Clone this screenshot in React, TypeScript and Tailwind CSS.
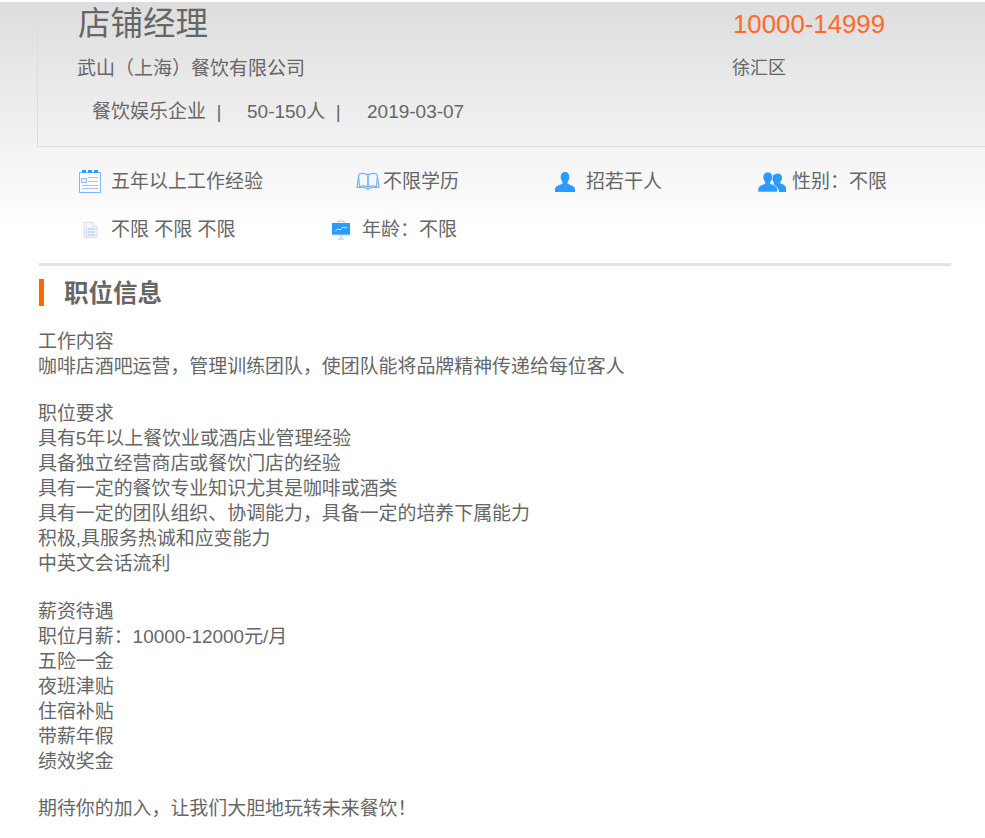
import React from "react";

const ExperienceIcon = () => (
  <svg width="24" height="24" viewBox="0 0 24 24" fill="none">
    <rect x="0.5" y="2.500" width="21" height="20" fill="#fff" stroke="#7db9ff" />
    <rect x="3" y="0" width="4" height="3" fill="#2a9bff" />
    <rect x="9" y="0" width="4" height="3" fill="#2a9bff" />
    <rect x="15" y="0" width="4" height="3" fill="#2a9bff" />
    <rect x="2.500" y="8.500" width="5" height="4" fill="#e4f1ff" stroke="#8cc3ff" />
    <path d="M9 7.500h10M9 11.500h10M3 15.500h16M3 18.500h16" stroke="#a9bff5" />
  </svg>
);

const BookIcon = () => (
  <svg width="24" height="20" viewBox="0 0 24 20" fill="none" stroke="#6fb2ff" strokeWidth="1.2">
    <path d="M2.500 3.500l1-1.500c3-1 6-1 8.500 1v12c-2.500-1.500-5.500-1.500-8.500-.5z" />
    <path d="M21.500 3.500l-1-1.500c-3-1-6-1-8.500 1v12c2.500-1.500 5.500-1.500 8.500-.5z" />
    <path d="M2.500 5L1 15.500h8l3 2 3-2h8L21.500 5" />
  </svg>
);

const PersonIcon = () => (
  <svg width="22" height="20" viewBox="0 0 22 20" fill="#2a9bff">
    <path d="M11 0c2.800 0 4.300 2 4.300 5 0 2-.8 3.900-1.800 5.100v1.600c1.500.9 7.500 2.300 7.500 5.300V20H1v-3c0-3 6-4.400 7.500-5.300v-1.600C7.500 8.900 6.700 7 6.700 5 6.700 2 8.200 0 11 0z" />
  </svg>
);

const PeopleIcon = () => (
  <svg width="28" height="20" viewBox="0 0 28 20" fill="#2a9bff">
    <path d="M20 1.500c2.500 0 4 1.800 4 4.200 0 1.700-.8 3.300-1.700 4.300v1.200c1.300.7 5.700 2 5.700 4.500V20h-7c0-3-1.500-4.500-4.500-6.200-.5-.3-.8-.5-.8-1.500V10c-.9-1-1.600-2.600-1.600-4.300 0-2.400 3.400-4.200 5.900-4.200z" />
    <path d="M10 0c3 0 4.500 2.200 4.500 5 0 2-1 3.900-2 5v1.500c1.500.9 7 2.300 7 5.300V20H0v-3.200c0-3 5.500-4.400 7-5.300V10c-1-1.100-2-3-2-5 0-2.800 2-5 5-5z" stroke="#fff" strokeWidth="0.6" />
  </svg>
);

const DocIcon = () => (
  <svg width="15" height="16" viewBox="0 0 15 16" fill="none">
    <path d="M1 .5h9l4 4v11H1z" fill="#f3f6ff" stroke="#d5dcfb" />
    <path d="M10 .5v4h4" fill="#fff" stroke="#d5dcfb" />
    <path d="M5 7h7M5 10h7M5 13h7" stroke="#aabcf5" />
    <path d="M3 7h1M3 10h1M3 13h1" stroke="#6fa8f5" />
  </svg>
);

const ChartIcon = () => (
  <svg width="20" height="20" viewBox="0 0 20 20" fill="none">
    <path d="M7 3V1h6v2" stroke="#9cc8f7" />
    <rect x="1" y="3" width="18" height="12" fill="#2a9bff" />
    <path d="M0 15h20" stroke="#b9dcff" />
    <path d="M4 11l3-2 2 1 3-3 2 1 2-1" stroke="#fff" strokeWidth="0.8" />
    <path d="M10 15v4M7 19h6" stroke="#9cc8f7" />
  </svg>
);

const lines = {
  job: ["工作内容", "咖啡店酒吧运营，管理训练团队，使团队能将品牌精神传递给每位客人"],
  need: [
    "职位要求",
    "具有5年以上餐饮业或酒店业管理经验",
    "具备独立经营商店或餐饮门店的经验",
    "具有一定的餐饮专业知识尤其是咖啡或酒类",
    "具有一定的团队组织、协调能力，具备一定的培养下属能力",
    "积极,具服务热诚和应变能力",
    "中英文会话流利",
  ],
  pay: ["薪资待遇", "职位月薪：10000-12000元/月", "五险一金", "夜班津贴", "住宿补贴", "带薪年假", "绩效奖金"],
  end: ["期待你的加入，让我们大胆地玩转未来餐饮！"],
};

export default function App() {
  return (
    <div className="h-[838px] overflow-hidden bg-white pt-[2px] font-['Liberation_Sans','Noto_Sans_CJK_SC',sans-serif] text-[19px] leading-[25px] text-[#666]">
      <div className="h-[260px] bg-[linear-gradient(#dddddd,#ffffff_87%)]">
        <div className="ml-[37px] h-[145px] border-b border-l border-[#dedede] pl-[40px]">
          <div className="flex h-[45px] items-center">
            <h1 className="w-[655px] text-[32.500px] leading-[45px]">店铺经理</h1>
            <span className="text-[25.800px] text-[#ff6a2a]">10000-14999</span>
          </div>
          <div className="mt-[9px] flex">
            <span className="-ml-[1px] w-[655px]">武山（上海）餐饮有限公司</span>
            <span className="text-[18px]">徐汇区</span>
          </div>
          <div className="mt-[18px] flex pl-[14px]">
            <span className="w-[155px]">餐饮娱乐企业&nbsp;&nbsp;|</span>
            <span className="w-[120px]">50-150人&nbsp;&nbsp;|</span>
            <span>2019-03-07</span>
          </div>
        </div>

        <div className="mt-[22px] flex h-[25px] items-center pl-[79px]">
          <div className="flex w-[277px] items-center gap-[8px]">
            <ExperienceIcon />
            <span>五年以上工作经验</span>
          </div>
          <div className="flex w-[198px] items-center gap-[3px]">
            <BookIcon />
            <span>不限学历</span>
          </div>
          <div className="flex w-[204px] items-center gap-[10px]">
            <PersonIcon />
            <span>招若干人</span>
          </div>
          <div className="flex items-center gap-[6px]">
            <PeopleIcon />
            <span>性别：不限</span>
          </div>
        </div>

        <div className="mt-[23px] flex h-[25px] items-center pl-[83px]">
          <div className="flex w-[248px] items-center gap-[13px]">
            <DocIcon />
            <span>不限 不限 不限</span>
          </div>
          <div className="flex items-center gap-[11px]">
            <ChartIcon />
            <span>年龄：不限</span>
          </div>
        </div>
      </div>

      <div className="mx-[39px] mt-[1px] w-[912px] border-t-[3px] border-[#e3e3e3] pt-[13px] text-[18.930px]">
        <h2 className="border-l-[5px] border-[#ff6600] pl-[20px] pt-[2px] text-[24.500px] font-bold leading-[25px]">职位信息</h2>
        <div className="mt-[23px] -ml-[1px]">
          {lines.job.map((t) => (
            <p key={t}>{t}</p>
          ))}
        </div>
        <div className="mt-[22px] -ml-[1px]">
          {lines.need.map((t) => (
            <p key={t}>{t}</p>
          ))}
        </div>
        <div className="mt-[23px] -ml-[1px]">
          {lines.pay.map((t) => (
            <p key={t}>{t}</p>
          ))}
        </div>
        <div className="mt-[22px] -ml-[1px]">
          {lines.end.map((t) => (
            <p key={t}>{t}</p>
          ))}
        </div>
      </div>
    </div>
  );
}
